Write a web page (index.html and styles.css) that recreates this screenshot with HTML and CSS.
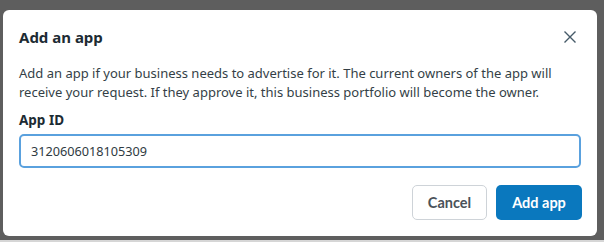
FILE: index.html
```html
<!DOCTYPE html>
<html lang="en">
<head>
    <meta charset="UTF-8">
    <title>Add an app</title>
    <link rel="stylesheet" href="styles.css">
</head>
<body>
    <div class="overlay">
        <div class="dialog">
            <div class="dialog-head">
                <h2>Add an app</h2>
                <button class="close-btn" aria-label="Close">
                    <svg width="14" height="14" viewBox="0 0 14 14">
                        <path d="M1.5 1.5 L12.5 12.5 M12.5 1.5 L1.5 12.5" stroke="#465a69" stroke-width="1.4" fill="none"/>
                    </svg>
                </button>
            </div>
            <p class="desc">Add an app if your business needs to advertise for it. The current owners of the app will receive your request. If they approve it, this business portfolio will become the owner.</p>
            <label class="field-label" for="app-id">App ID</label>
            <input id="app-id" class="field" type="text" value="3120606018105309">
            <div class="actions">
                <button class="btn btn-cancel">Cancel</button>
                <button class="btn btn-primary">Add app</button>
            </div>
        </div>
        <div class="bottom-strip"></div>
    </div>
</body>
</html>
```

FILE: styles.css
```css
* {
    margin: 0;
    padding: 0;
    box-sizing: border-box;
}

body {
    font-family: 'Noto Sans', 'Open Sans', sans-serif;
    color: #1c2b33;
    background-color: #5e5e5e;
    width: 604px;
    height: 242px;
    overflow: hidden;
}

.overlay {
    padding: 10px 7px 0 3px;
    height: 242px;
    display: flex;
    flex-direction: column;
}

/* Kotak dialog */
.dialog {
    background-color: #ffffff;
    border-radius: 6px;
    height: 226px;
    padding: 17px 16px 0 16px;
}

.bottom-strip {
    margin-top: 4px;
    height: 2px;
    background-color: #d6d6d6;
    margin-left: -3px;
    margin-right: -7px;
}

.dialog-head {
    display: flex;
    justify-content: space-between;
    align-items: center;
    height: 20px;
}

.dialog-head h2 {
    font-size: 15px;
    font-weight: 700;
    line-height: 20px;
}

.close-btn {
    background: none;
    border: none;
    width: 14px;
    height: 14px;
    margin-right: 4px;
    display: flex;
}

.desc {
    margin-top: 17px;
    font-size: 13px;
    line-height: 19px;
    color: #343f47;
    padding-right: 10px;
}

.field-label {
    display: block;
    margin-top: 9px;
    font-size: 13.5px;
    font-weight: 700;
    line-height: 18px;
}

.field {
    display: block;
    width: 562px;
    height: 34px;
    margin-top: 5px;
    border: 2px solid #5aa1de;
    border-radius: 5px;
    padding: 0 10px;
    font-family: inherit;
    font-size: 12.7px;
    color: #2f3a42;
    outline: none;
}

.actions {
    display: flex;
    justify-content: flex-end;
    gap: 9px;
    margin-top: 17px;
    width: 563px;
}

.btn {
    height: 35px;
    border-radius: 5px;
    font-family: 'Lato', sans-serif;
    font-size: 14.5px;
    font-weight: 700;
    cursor: pointer;
}

.btn-cancel {
    width: 75px;
    background-color: #ffffff;
    border: 1px solid #ced3d8;
    color: #4a5259;
}

.btn-primary {
    width: 86px;
    background-color: #0a78be;
    border: none;
    color: #ffffff;
}
```
